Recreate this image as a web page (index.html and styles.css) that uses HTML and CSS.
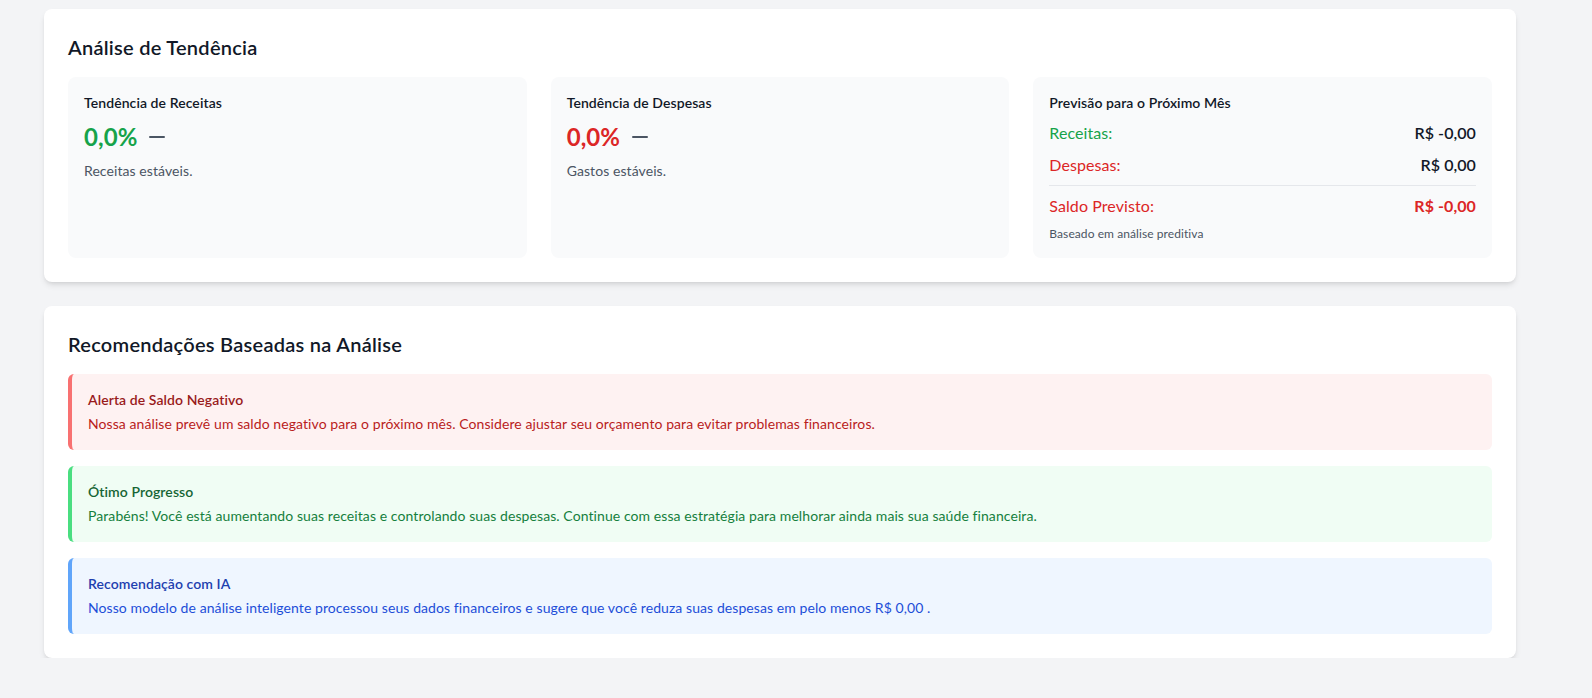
FILE: index.html
```html
<!DOCTYPE html>
<html lang="pt-BR">
<head>
<meta charset="utf-8">
<title>Análise</title>
<link rel="stylesheet" href="styles.css">
</head>
<body>
<div class="page">
  <section class="card">
    <h2 class="card-title">Análise de Tendência</h2>
    <div class="trend-grid">
      <div class="box">
        <h3 class="box-title">Tendência de Receitas</h3>
        <div class="pct-row">
          <span class="pct pct-green">0,0%</span>
          <svg class="minus" width="24" height="24" viewBox="0 0 24 24" fill="none" stroke="currentColor" stroke-width="2" stroke-linecap="round"><path d="M5 12h14"/></svg>
        </div>
        <p class="box-note">Receitas estáveis.</p>
      </div>
      <div class="box">
        <h3 class="box-title">Tendência de Despesas</h3>
        <div class="pct-row">
          <span class="pct pct-red">0,0%</span>
          <svg class="minus" width="24" height="24" viewBox="0 0 24 24" fill="none" stroke="currentColor" stroke-width="2" stroke-linecap="round"><path d="M5 12h14"/></svg>
        </div>
        <p class="box-note">Gastos estáveis.</p>
      </div>
      <div class="box">
        <h3 class="box-title">Previsão para o Próximo Mês</h3>
        <div class="forecast">
          <div class="f-row"><span class="lbl-green">Receitas:</span><span class="val">R$ -0,00</span></div>
          <div class="f-row"><span class="lbl-red">Despesas:</span><span class="val">R$ 0,00</span></div>
          <div class="f-total">
            <div class="f-row"><span class="lbl-red">Saldo Previsto:</span><span class="val val-red">R$ -0,00</span></div>
          </div>
        </div>
        <p class="small-note">Baseado em análise preditiva</p>
      </div>
    </div>
  </section>

  <section class="card">
    <h2 class="card-title">Recomendações Baseadas na Análise</h2>
    <div class="alerts">
      <div class="alert alert-red">
        <h4 class="alert-title">Alerta de Saldo Negativo</h4>
        <p class="alert-text">Nossa análise prevê um saldo negativo para o próximo mês. Considere ajustar seu orçamento para evitar problemas financeiros.</p>
      </div>
      <div class="alert alert-green">
        <h4 class="alert-title">Ótimo Progresso</h4>
        <p class="alert-text">Parabéns! Você está aumentando suas receitas e controlando suas despesas. Continue com essa estratégia para melhorar ainda mais sua saúde financeira.</p>
      </div>
      <div class="alert alert-blue">
        <h4 class="alert-title">Recomendação com IA</h4>
        <p class="alert-text">Nosso modelo de análise inteligente processou seus dados financeiros e sugere que você reduza suas despesas em pelo menos R$ 0,00 .</p>
      </div>
    </div>
  </section>
</div>
</body>
</html>
```

FILE: styles.css
```css
* { box-sizing: border-box; }
html, body { margin: 0; padding: 0; }
body {
  background: #f3f4f6;
  font-family: "Segoe UI", Lato, "Noto Sans", sans-serif;
  font-variant-ligatures: none;
  letter-spacing: 0.08px;
  color: #111827;
}
h2, h3, h4, p { margin: 0; }

.page {
  padding: 9px 76px 0 44px;
  display: flex;
  flex-direction: column;
  gap: 24px;
}

.card {
  background: #ffffff;
  border-radius: 8px;
  box-shadow: 0 4px 6px -1px rgba(0,0,0,0.1), 0 2px 4px -2px rgba(0,0,0,0.1);
  padding: 24px;
}

.card-title {
  font-size: 20px;
  line-height: 28px;
  font-weight: 600;
  letter-spacing: 0.26px;
  color: #111827;
  margin-bottom: 16px;
}

.trend-grid {
  display: grid;
  grid-template-columns: repeat(3, 1fr);
  gap: 24px;
}

.box {
  background: #f9fafb;
  border-radius: 8px;
  padding: 16px;
}

.box-title {
  font-size: 14px;
  line-height: 20px;
  font-weight: 600;
  color: #111827;
}

.pct-row {
  display: flex;
  align-items: center;
  margin-top: 8px;
}
.pct {
  font-size: 24px;
  line-height: 32px;
  font-weight: 700;
}
.pct-green { color: #16a34a; }
.pct-red { color: #dc2626; }
.minus { margin-left: 8px; color: #4b5563; }

.box-note {
  margin-top: 8px;
  font-size: 14px;
  line-height: 20px;
  color: #4b5563;
}

.forecast {
  margin-top: 8px;
  display: flex;
  flex-direction: column;
  gap: 8px;
}
.f-row {
  display: flex;
  justify-content: space-between;
  font-size: 16px;
  line-height: 24px;
}
.lbl-green { color: #16a34a; }
.lbl-red { color: #dc2626; }
.val { font-weight: 600; color: #111827; }
.val-red { font-weight: 700; color: #dc2626; }
.f-total {
  border-top: 1px solid #e5e7eb;
  padding-top: 8px;
}
.small-note {
  margin-top: 8px;
  font-size: 12px;
  line-height: 16px;
  color: #4b5563;
}

.alerts {
  display: flex;
  flex-direction: column;
  gap: 16px;
}
.alert {
  border-left: 4px solid;
  border-radius: 6px;
  padding: 16px;
}
.alert-title {
  font-size: 14px;
  line-height: 20px;
  font-weight: 600;
}
.alert-text {
  margin-top: 4px;
  font-size: 14px;
  line-height: 20px;
}
.alert-red { background: #fef2f2; border-left-color: #f87171; }
.alert-red .alert-title { color: #991b1b; }
.alert-red .alert-text { color: #b91c1c; }
.alert-green { background: #f0fdf4; border-left-color: #4ade80; }
.alert-green .alert-title { color: #166534; }
.alert-green .alert-text { color: #15803d; }
.alert-blue { background: #eff6ff; border-left-color: #60a5fa; }
.alert-blue .alert-title { color: #1e40af; }
.alert-blue .alert-text { color: #1d4ed8; }
```
